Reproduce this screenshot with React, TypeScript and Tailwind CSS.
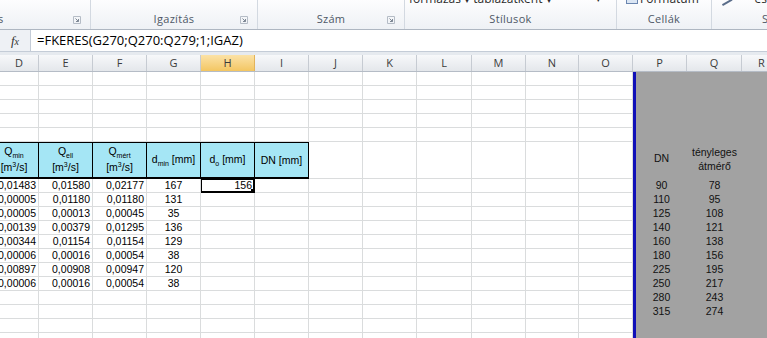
import { FC, ReactNode } from "react";

const LEFT_COLS = [
  { id: "D", w: 39 },
  { id: "E", w: 54 },
  { id: "F", w: 54 },
  { id: "G", w: 54 },
  { id: "H", w: 54 },
  { id: "I", w: 54 },
  { id: "J", w: 54 },
  { id: "K", w: 54 },
  { id: "L", w: 55 },
  { id: "M", w: 54 },
  { id: "N", w: 53 },
  { id: "O", w: 54 },
];

const data = [
  ["0,01483", "0,01580", "0,02177", "167"],
  ["0,00005", "0,01180", "0,01180", "131"],
  ["0,00005", "0,00013", "0,00045", "35"],
  ["0,00139", "0,00379", "0,01295", "136"],
  ["0,00344", "0,01154", "0,01154", "129"],
  ["0,00006", "0,00016", "0,00054", "38"],
  ["0,00897", "0,00908", "0,00947", "120"],
  ["0,00006", "0,00016", "0,00054", "38"],
];

const lookup = [
  ["90", "78"],
  ["110", "95"],
  ["125", "108"],
  ["140", "121"],
  ["160", "138"],
  ["180", "156"],
  ["225", "195"],
  ["250", "217"],
  ["280", "243"],
  ["315", "274"],
];

const cellFont = { fontFamily: '"Liberation Sans", Arial, sans-serif' };

const Launcher = () => (
  <svg width="8" height="8" viewBox="0 0 8 8" className="shrink-0">
    <path d="M0.5 0.5h7v7h-7z" fill="none" stroke="#b5bcc6" />
    <path d="M2.5 2.5l3 3M5.5 3v2.5H3" fill="none" stroke="#7d8794" />
  </svg>
);

const RibbonGroup: FC<{ w: number; label: ReactNode; top?: ReactNode; launcher?: boolean; last?: boolean }> = ({
  w,
  label,
  top,
  launcher,
  last,
}) => (
  <div
    className={`flex shrink-0 flex-col ${last ? "" : "border-r border-[#d3d9e1]"}`}
    style={{ width: w }}
  >
    <div className="-mt-[9px] flex h-[16px] items-center whitespace-nowrap text-[12px] text-[#2b2b2b]">{top}</div>
    <div className="relative flex h-[21px] items-center justify-center pt-[3px] text-[11px] tracking-[0.3px] text-[#4e5866]">
      {label}
      {launcher && (
        <div className="absolute right-[9px] top-[9px]">
          <Launcher />
        </div>
      )}
    </div>
  </div>
);

// one row of the sheet: left gridded columns, blue border, grey lookup area
const Row: FC<{ h: number; cells?: (ReactNode | null)[]; right?: [ReactNode, ReactNode] }> = ({ h, cells = [], right }) => (
  <div className="flex shrink-0" style={{ height: h }}>
    {LEFT_COLS.map((c, i) =>
      cells[i] !== undefined && cells[i] !== null ? (
        <div key={c.id} className="shrink-0 overflow-hidden" style={{ width: c.w }}>
          {cells[i]}
        </div>
      ) : (
        <div key={c.id} className="shrink-0 border-b border-r border-[#dadcdd]" style={{ width: c.w }} />
      )
    )}
    <div className="w-[3px] shrink-0 bg-[#1010b8]" />
    <div className="flex flex-1 bg-[#a2a2a2] text-[10.5px] text-[#111]" style={cellFont}>
      <div className="flex w-[51px] shrink-0 items-center justify-center">{right?.[0]}</div>
      <div className="flex w-[55px] shrink-0 items-center justify-center">{right?.[1]}</div>
    </div>
  </div>
);

const Num: FC<{ v: string; center?: boolean }> = ({ v, center }) => (
  <div
    className={`flex h-full items-center border-b border-r border-[#dadcdd] pr-[2px] text-[10.5px] leading-none text-black ${
      center ? "justify-center pl-[2px]" : "justify-end"
    }`}
    style={cellFont}
  >
    {v}
  </div>
);

const Head: FC<{ children: ReactNode; cut?: boolean }> = ({ children, cut }) => (
  <div
    className={`flex h-full flex-col items-center justify-center border-b-2 border-r border-t border-black bg-[#a5e6f5] text-center text-[10.5px] leading-[15px] text-black ${
      cut ? "-ml-[10px] w-[49px]" : ""
    }`}
    style={cellFont}
  >
    {children}
  </div>
);

const Sub: FC<{ children: ReactNode }> = ({ children }) => (
  <span className="relative top-[3px] text-[7px]">{children}</span>
);

const M3 = () => (
  <span>
    [m<span className="relative -top-[4px] text-[7px]">3</span>/s]
  </span>
);

export default function App() {
  return (
    <div className="flex h-[338px] w-[767px] flex-col overflow-hidden bg-white">
      {/* Ribbon (cut off at the top) */}
      <div
        className="flex h-[30px] shrink-0 overflow-hidden border-b border-[#aeb6c1] bg-gradient-to-b from-[#fdfdfe] to-[#eef1f5]"
        style={{ fontFamily: '"Open Sans", "Noto Sans", sans-serif' }}
      >
        <RibbonGroup w={91} label={<span className="absolute left-[-2px]">s</span>} launcher />
        <RibbonGroup w={167} label="Igazítás" launcher />
        <RibbonGroup w={147} label="Szám" launcher />
        <RibbonGroup
          w={212}
          label="Stílusok"
          top={
            <>
              <span className="ml-[4px]">formázás ▾ táblázatként ▾</span>
              <span className="ml-[44px] text-[9px]">▾</span>
            </>
          }
        />
        <RibbonGroup
          w={95}
          label="Cellák"
          top={
            <>
              <span className="ml-[9px] inline-block h-[10px] w-[12px] border border-[#6b86b0] bg-[#dbe6f4]" />
              <span className="ml-[2px]">Formátum</span>
            </>
          }
        />
        <RibbonGroup
          w={55}
          last
          label={<span className="absolute left-[50px]">S</span>}
          top={
            <>
              <span className="ml-[8px] inline-block h-[9px] w-[12px] rotate-[-30deg] border-b-2 border-[#5a6d8a]" />
              <span className="ml-[24px]">és</span>
            </>
          }
        />
      </div>

      {/* Formula bar */}
      <div className="flex h-[22px] shrink-0 border-b border-[#c4ccd7] bg-white">
        <div className="flex w-[31px] shrink-0 items-center justify-center border-r border-[#c4ccd7] bg-[#eef1f5]">
          <span className="text-[13px] italic text-[#333]" style={{ fontFamily: '"Liberation Serif", serif' }}>
            f<span className="text-[10px]">x</span>
          </span>
        </div>
        <div
          className="flex items-center pl-[6px] text-[13px] text-black"
          style={{ fontFamily: '"Open Sans", "Noto Sans", sans-serif' }}
        >
          =FKERES(G270;Q270:Q279;1;IGAZ)
        </div>
      </div>
      <div className="h-[3px] shrink-0 bg-[#e6eaef]" />

      {/* Column headers */}
      <div
        className="flex h-[17px] shrink-0 border-b border-[#b5bcc6] text-[11px] text-[#3b3b3b]"
        style={{ fontFamily: '"Open Sans", "Noto Sans", sans-serif' }}
      >
        {[...LEFT_COLS, { id: "P", w: 54 }, { id: "Q", w: 55 }, { id: "R", w: 40 }].map((c) => (
          <div
            key={c.id}
            className={`flex shrink-0 items-center justify-center border-r ${
              c.id === "H"
                ? "border-[#e2b35a] bg-gradient-to-b from-[#fbe2a6] to-[#f3c661]"
                : "border-[#c6cbd2] bg-gradient-to-b from-[#f7f8fa] to-[#e4e7eb]"
            }`}
            style={{ width: c.w }}
          >
            {c.id}
          </div>
        ))}
      </div>

      {/* Sheet body */}
      <div className="flex flex-1 flex-col">
        <Row h={14} />
        <Row h={14} />
        <Row h={14} />
        <Row h={14} />
        <Row h={14} />
        <Row
          h={37}
          cells={[
            <Head cut>
              <span>
                Q<Sub>min</Sub>
              </span>
              <M3 />
            </Head>,
            <Head>
              <span>
                Q<Sub>ell</Sub>
              </span>
              <M3 />
            </Head>,
            <Head>
              <span>
                Q<Sub>mért</Sub>
              </span>
              <M3 />
            </Head>,
            <Head>
              <span>
                d<Sub>min</Sub> [mm]
              </span>
            </Head>,
            <Head>
              <span>
                d<Sub>o</Sub> [mm]
              </span>
            </Head>,
            <Head>DN [mm]</Head>,
          ]}
          right={[
            <span className="mt-[-3px]">DN</span>,
            <span className="mt-[-3px] text-center leading-[14px]">
              tényleges
              <br />
              átmérő
            </span>,
          ]}
        />
        {lookup.map((l, r) => {
          const d = data[r];
          return (
            <Row
              key={r}
              h={14}
              right={[l[0], l[1]]}
              cells={
                d
                  ? [
                      <Num v={d[0]} />,
                      <Num v={d[1]} />,
                      <Num v={d[2]} />,
                      <Num v={d[3]} center />,
                      r === 0 ? (
                        <div className="relative h-full">
                          <Num v="156" />
                          <div className="absolute -left-[1px] -top-[1px] bottom-0 right-0 border-2 border-black" />
                          <div className="absolute bottom-[-1px] right-[-1px] h-[5px] w-[5px] bg-black" />
                        </div>
                      ) : null,
                    ]
                  : []
              }
            />
          );
        })}
        <Row h={14} />
        <Row h={14} />
      </div>
    </div>
  );
}
